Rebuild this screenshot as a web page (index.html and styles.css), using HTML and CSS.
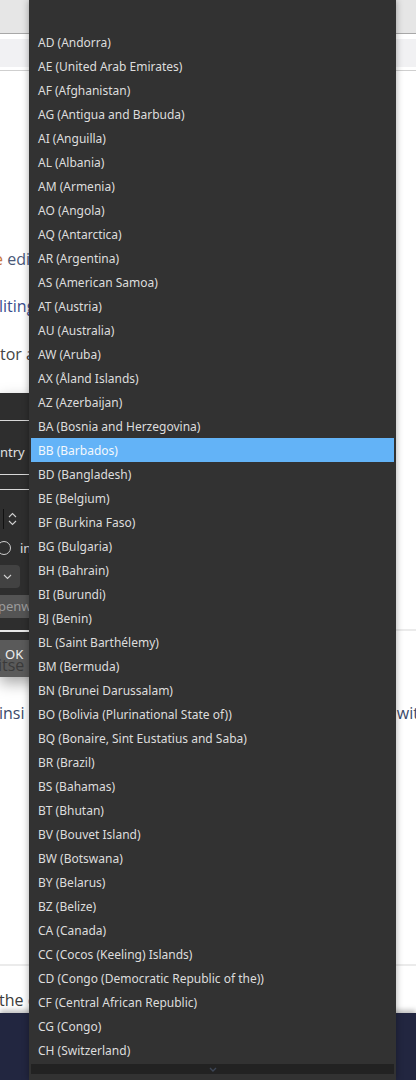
FILE: index.html
```html
<!DOCTYPE html>
<html>
<head>
<meta charset="utf-8">
<link rel="stylesheet" href="styles.css">
</head>
<body>
<div class="page">
  <div class="topbar"></div>
  <div class="gap"></div>
  <div class="band"></div>
  <div class="gap2"></div>
  <main class="content">
    <p class="line l1"><span class="orange">e</span> edit</p>
    <p class="line l2 blue">liting</p>
    <p class="line l3">tor a</p>
    <div class="spacer1"></div>
    <div class="rule r1"></div>
    <div class="row-split l4">
      <span class="insi">insi</span>
      <span class="wit">wit</span>
    </div>
    <div class="spacer2"></div>
    <div class="rule r2"></div>
    <p class="line l5">the <span class="blue2">c</span></p>
  </main>
  <footer class="navy"></footer>
</div>

<div class="dialog">
  <div class="d-rule d-r1"></div>
  <div class="d-label">ntry</div>
  <div class="d-rule d-r2"></div>
  <div class="d-rule d-r3"></div>
  <div class="d-spin">
    <span class="d-sep"></span>
    <svg class="d-updown" width="9" height="14" viewBox="0 0 9 14"><path d="M1 5 L4.5 1.5 L8 5 M1 9 L4.5 12.5 L8 9" fill="none" stroke="#cfcfcf" stroke-width="1.1"/></svg>
  </div>
  <div class="d-radio-row"><span class="d-radio"></span><span class="d-in">in</span></div>
  <div class="d-combo"><svg width="9" height="6" viewBox="0 0 9 6"><path d="M1 1 L4.5 4.5 L8 1" fill="none" stroke="#d0d0d0" stroke-width="1.1"/></svg></div>
  <div class="d-input">penw</div>
  <div class="d-rule d-r4"></div>
  <div class="d-ok"><span class="ok">OK</span><span class="itse">itse</span></div>
</div>

<div class="popup">
  <ul class="list">
    <li>AD (Andorra)</li>
    <li>AE (United Arab Emirates)</li>
    <li>AF (Afghanistan)</li>
    <li>AG (Antigua and Barbuda)</li>
    <li>AI (Anguilla)</li>
    <li>AL (Albania)</li>
    <li>AM (Armenia)</li>
    <li>AO (Angola)</li>
    <li>AQ (Antarctica)</li>
    <li>AR (Argentina)</li>
    <li>AS (American Samoa)</li>
    <li>AT (Austria)</li>
    <li>AU (Australia)</li>
    <li>AW (Aruba)</li>
    <li>AX (Åland Islands)</li>
    <li>AZ (Azerbaijan)</li>
    <li>BA (Bosnia and Herzegovina)</li>
    <li class="selected">BB (Barbados)</li>
    <li>BD (Bangladesh)</li>
    <li>BE (Belgium)</li>
    <li>BF (Burkina Faso)</li>
    <li>BG (Bulgaria)</li>
    <li>BH (Bahrain)</li>
    <li>BI (Burundi)</li>
    <li>BJ (Benin)</li>
    <li>BL (Saint Barthélemy)</li>
    <li>BM (Bermuda)</li>
    <li>BN (Brunei Darussalam)</li>
    <li>BO (Bolivia (Plurinational State of))</li>
    <li>BQ (Bonaire, Sint Eustatius and Saba)</li>
    <li>BR (Brazil)</li>
    <li>BS (Bahamas)</li>
    <li>BT (Bhutan)</li>
    <li>BV (Bouvet Island)</li>
    <li>BW (Botswana)</li>
    <li>BY (Belarus)</li>
    <li>BZ (Belize)</li>
    <li>CA (Canada)</li>
    <li>CC (Cocos (Keeling) Islands)</li>
    <li>CD (Congo (Democratic Republic of the))</li>
    <li>CF (Central African Republic)</li>
    <li>CG (Congo)</li>
    <li>CH (Switzerland)</li>
  </ul>
  <div class="scroll-down"><svg width="8" height="5" viewBox="0 0 8 5"><path d="M1 1 L4 4 L7 1" fill="none" stroke="#3d4656" stroke-width="1.4"/></svg></div>
</div>
</body>
</html>
```
FILE: styles.css
```css
html, body {
  margin: 0;
  padding: 0;
  width: 416px;
  height: 1080px;
  overflow: hidden;
  background: #ffffff;
}
body {
  position: relative;
  font-family: "Open Sans", "Noto Sans", sans-serif;
}
.page {
  display: flex;
  flex-direction: column;
  height: 1080px;
  overflow: hidden;
}
.topbar {
  height: 33px;
  background: #e6e6e6;
  border-bottom: 1px solid #a8a8a8;
}
.gap { height: 5px; background: #fff; }
.band { height: 28px; background: #f1f1f3; }
.gap2 {
  height: 3px;
  background: #fff;
  border-bottom: 1px solid #cfcfcf;
}
.content {
  flex: 1;
  min-height: 0;
  padding-top: 176px;
  display: flex;
  flex-direction: column;
}
.line {
  margin: 0 0 24px 0;
  height: 24px;
  line-height: 24px;
  font-size: 16px;
  color: #3a3f4a;
  white-space: nowrap;
  flex: none;
}
.l1 { margin-left: -6px; color: #4a5878; }
.orange { color: #c8753a; }
.l2 { margin-left: -1px; margin-top: -1px; }
.blue { color: #3b4d8e; }
.l3 { color: #444444; }
.spacer1 { height: 239px; flex: none; }
.rule {
  height: 2px;
  background: #ebebeb;
  flex: none;
}
.r1 { margin-bottom: 70px; }
.row-split {
  display: flex;
  justify-content: space-between;
  height: 24px;
  line-height: 24px;
  font-size: 16px;
  color: #3c4a6a;
  white-space: nowrap;
  flex: none;
}
.insi { margin-left: -1px; }
.wit { margin-right: -3px; }
.spacer2 { height: 239px; flex: none; }
.r2 { margin-bottom: 24px; }
.l5 {
  margin: 0 0 0 -1px;
  height: 20px;
  line-height: 20px;
  color: #3b3b3b;
}
.blue2 { color: #3c6db0; }
.navy {
  height: 67px;
  flex: none;
  background: #222640;
  box-shadow: 0 -3px 5px rgba(0,0,0,0.25);
}

/* dialog overlay */
.dialog {
  position: absolute;
  left: 0;
  top: 393px;
  width: 60px;
  height: 284px;
  background: #2e2e2e;
  display: flex;
  flex-direction: column;
  font-family: "Noto Sans", sans-serif;
  font-size: 13px;
  color: #e0e0e0;
  box-shadow: 0 6px 14px rgba(0,0,0,0.35);
}
.d-rule {
  height: 1px;
  background: #d8d8d8;
}
.d-r1 { margin-top: 27px; }
.d-label {
  margin-top: 20px;
  height: 22px;
  line-height: 22px;
}
.d-r2 { margin-top: 11px; }
.d-r3 { margin-top: 14px; }
.d-spin {
  margin-top: 18px;
  height: 22px;
  display: flex;
  align-items: center;
}
.d-sep {
  width: 1px;
  height: 20px;
  margin-left: 3px;
  background: #111;
}
.d-updown { margin-left: 4px; }
.d-radio-row {
  margin-top: 7px;
  height: 22px;
  display: flex;
  align-items: center;
}
.d-radio {
  width: 12px;
  height: 12px;
  margin-left: -3px;
  border: 1px solid #cfcfcf;
  border-radius: 50%;
}
.d-in { margin-left: 9px; }
.d-combo {
  margin-top: 6px;
  width: 28px;
  margin-left: -8px;
  height: 23px;
  border-radius: 4px;
  background: #424242;
  display: flex;
  align-items: center;
  justify-content: flex-end;
  padding-right: 8px;
  box-sizing: border-box;
}
.d-input {
  margin-top: 7px;
  height: 23px;
  line-height: 23px;
  background: #545454;
  color: #9c9c9c;
  margin-left: -2px;
  border-radius: 3px 0 0 3px;
}
.d-r4 { margin-top: 12px; height: 2px; background: #e6e6e6; }
.d-ok {
  margin-top: 8px;
  flex: 1;
  background: #5a5a5a;
  display: flex;
  flex-direction: column;
  line-height: 13px;
  padding-top: 8px;
  box-sizing: border-box;
}
.ok { margin-left: 5px; color: #eeeeee; font-size: 13px; }
.itse {
  margin-left: -2px;
  margin-top: -5px;
  color: #3a3a3a;
  font-family: "Open Sans", sans-serif;
  font-size: 16px;
  line-height: 18px;
}

/* popup list */
.popup {
  position: absolute;
  left: 29px;
  top: 0;
  width: 367px;
  height: 1080px;
  box-sizing: border-box;
  padding: 30px 2px 0 2px;
  background: #323232;
  box-shadow: 0 0 7px rgba(0,0,0,0.35);
  font-family: "Noto Sans", sans-serif;
}
.list {
  list-style: none;
  margin: 0;
  padding: 0;
}
.list li {
  height: 24px;
  box-sizing: border-box;
  padding-top: 1px;
  line-height: 23px;
  padding-left: 7px;
  font-size: 12px;
  color: #dddddd;
  white-space: nowrap;
}
.list li.selected {
  background: #63b3f7;
  color: #f4f8fc;
}
.scroll-down {
  margin-top: 2px;
  height: 10px;
  background: #222222;
  display: flex;
  align-items: center;
  justify-content: center;
}
```
